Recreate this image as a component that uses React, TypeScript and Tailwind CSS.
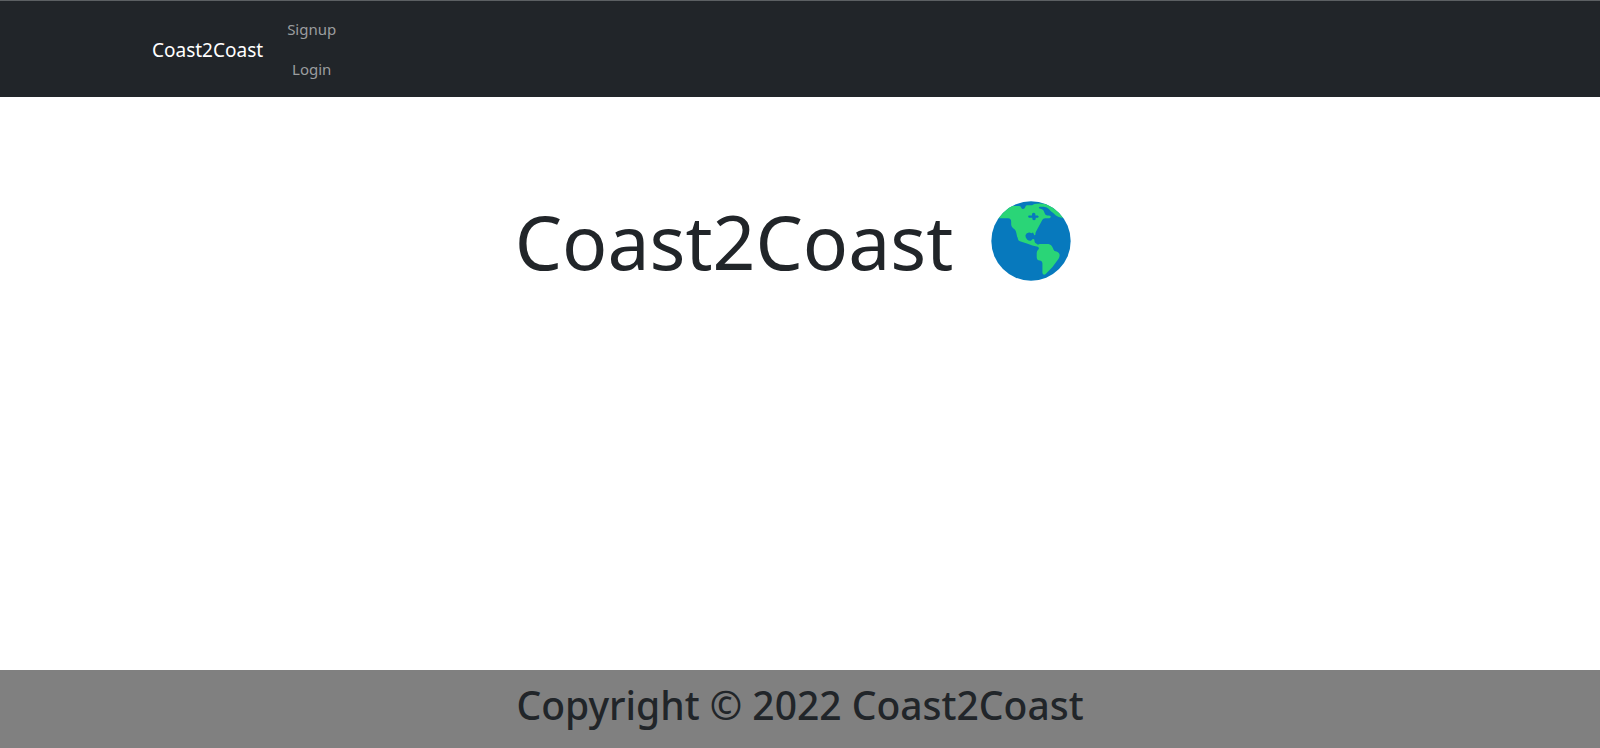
function Globe() {
  return (
    <svg viewBox="33 37 238 238" className="size-20" role="img" aria-label="Globe showing the Americas">
      <clipPath id="disc">
        <circle cx="152" cy="156" r="118" />
      </clipPath>
      <circle cx="152" cy="156" r="118" fill="#0779bd" />
      <g clipPath="url(#disc)">
        <path
          fill="#2ad577"
          d="M30 88H84Q93 88 93 99V107Q93 112 98 117L103 121Q107 125 108 131L111 144Q113 146 113 150Q114 155 119 157L142 164Q155 170 172 173Q178 177 174 181Q169 184 169 192V205Q169 211 174 213L181 215Q186 217 186 223V251Q188 259 195 255L216 233L234 209Q238 203 237 196Q235 189 222 186Q219 183 217 177Q213 166 204 165H178Q175 165 173 167L164 161Q162 157 162 152Q160 148 156 151L152 155Q146 156 141 152Q134 146 136 138Q138 132 146 131Q149 130 153 133L158 131L162 139Q166 139 166 130L171 120L186 93Q188 88 194 88H207Q212 86 211 83Q210 80 204 80H200Q194 79 193 74L190 67Q188 62 183 61L177 59Q173 56 178 54H190Q200 55 205 61L212 68Q219 72 226 80Q234 86 244 87H270V30H205V49Q180 42 162 46L155 50H140Q136 50 135 55Q133 62 127 61Q123 60 122 55Q121 52 116 52H90L30 70Z"
        />
        <path
          fill="#0779bd"
          d="M145 80H155V75Q160 69 165 75V80H172Q178 84 172 87H166V91Q161 97 156 91V87H146Q141 84 145 80Z"
        />
      </g>
    </svg>
  );
}

export default function App() {
  return (
    <div className="flex min-h-screen flex-col bg-white font-['Noto_Sans',sans-serif] text-[#212529]">
      <nav className="border-t border-[#5c6063] bg-[#212529] py-2">
        <div className="mx-auto flex max-w-[1320px] items-center px-3">
          <a href="#" className="mr-4 pt-1.5 pb-1 text-[19px] leading-[30px] text-white">
            Coast2Coast
          </a>
          <div className="flex flex-col text-center text-[15px] leading-6 text-[#9b9d9f]">
            <a href="#signup" className="p-2">Signup</a>
            <a href="#login" className="p-2">Login</a>
          </div>
        </div>
      </nav>
      <main className="flex flex-1 flex-col px-3 pt-24">
        <h1 className="flex items-center justify-center gap-[38px] pr-[14px] text-[75px] leading-[96px]">
          Coast2Coast
          <Globe />
        </h1>
      </main>
      <footer className="bg-[#808080] px-3 pt-[10px] pb-[18px] text-center">
        <h2 className="text-[39px] leading-[50px] font-medium">Copyright © 2022 Coast2Coast</h2>
      </footer>
    </div>
  );
}
